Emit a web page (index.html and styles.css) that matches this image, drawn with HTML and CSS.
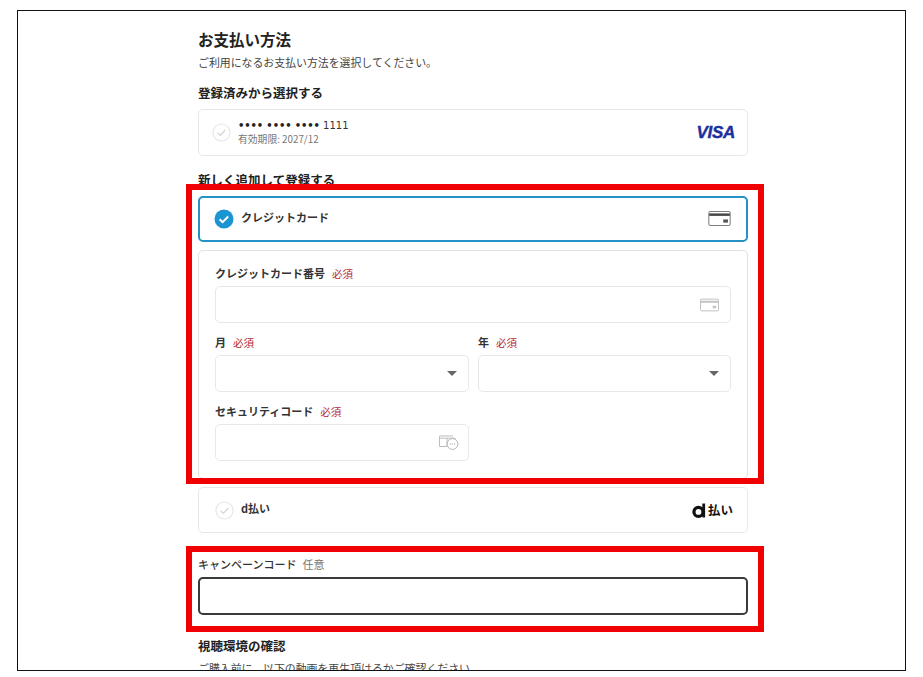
FILE: index.html
```html
<!DOCTYPE html>
<html lang="ja">
<head>
<meta charset="utf-8">
<title>お支払い方法</title>
<link rel="stylesheet" href="styles.css">
</head>
<body>
<div class="frame">
  <main class="content">
    <h1 class="title">お支払い方法</h1>
    <p class="lead">ご利用になるお支払い方法を選択してください。</p>

    <h2 class="section first">登録済みから選択する</h2>
    <div class="option saved">
      <svg class="check" viewBox="0 0 20 20"><circle cx="10" cy="10" r="9" fill="#fff" stroke="#e6e6e6" stroke-width="1.2"/><path d="M6 10.3l2.8 2.7L14 7.400" fill="none" stroke="#d4d4d4" stroke-width="1.3"/></svg>
      <div class="card-text">
        <div class="card-number"><span class="dots">••••</span> <span class="dots">••••</span> <span class="dots">••••</span> 1111</div>
        <div class="card-expiry">有効期限: 2027/12</div>
      </div>
      <span class="visa">VISA</span>
    </div>

    <h2 class="section second">新しく追加して登録する</h2>
    <div class="option selected">
      <svg class="check" viewBox="0 0 20 20"><circle cx="10" cy="10" r="9.500" fill="#1b95d2"/><path d="M5.600 10.200l3 2.900 5.600-5.600" fill="none" stroke="#fff" stroke-width="2"/></svg>
      <span class="option-name">クレジットカード</span>
      <svg class="card-icon" viewBox="0 0 24 16"><rect x=".6" y=".6" width="22.800" height="14.800" rx="1.600" fill="#fff" stroke="#7d7d7d" stroke-width="1.100"/><rect x="1" y="2.600" width="22" height="2.600" fill="#444"/><rect x="16" y="9" width="5" height="3.400" fill="#555"/></svg>
    </div>

    <div class="panel">
      <div class="field wide">
        <label class="label">クレジットカード番号<span class="req">必須</span></label>
        <div class="input">
          <svg class="card-icon small" viewBox="0 0 24 16"><rect x=".6" y=".6" width="22.800" height="14.800" rx="1.400" fill="#fff" stroke="#b8b8b8" stroke-width="1.100"/><rect x="1" y="2.600" width="22" height="2.600" fill="#c4c4c4"/><rect x="16" y="9" width="4.500" height="3.200" fill="#c4c4c4"/></svg>
        </div>
      </div>
      <div class="field">
        <label class="label">月<span class="req">必須</span></label>
        <div class="input"><span class="caret"></span></div>
      </div>
      <div class="field">
        <label class="label">年<span class="req">必須</span></label>
        <div class="input"><span class="caret"></span></div>
      </div>
      <div class="field">
        <label class="label">セキュリティコード<span class="req">必須</span></label>
        <div class="input">
          <svg class="cvc-icon" viewBox="0 0 21 15"><path d="M15 1H1.500v10.500H9" fill="none" stroke="#bdbdbd" stroke-width="1"/><path d="M1.500 3.200H17V5M9 3.200v8" fill="none" stroke="#bdbdbd" stroke-width="1"/><circle cx="14.500" cy="9" r="5.400" fill="#fff" stroke="#b5b5b5" stroke-width="1"/><path d="M11.800 9h1.200M13.900 9h1.200M16 9h1.200" stroke="#a5a5a5" stroke-width="1.100"/></svg>
        </div>
      </div>
    </div>

    <div class="option dpay">
      <svg class="check" viewBox="0 0 20 20"><circle cx="10" cy="10" r="9" fill="#fff" stroke="#e6e6e6" stroke-width="1.2"/><path d="M6 10.300l2.800 2.700L14 7.400" fill="none" stroke="#d4d4d4" stroke-width="1.300"/></svg>
      <span class="option-name">d払い</span>
      <span class="dpay-logo">
        <svg class="dpay-d" viewBox="0 0 13 14"><circle cx="6" cy="8.300" r="4.200" fill="none" stroke="#111" stroke-width="3"/><path d="M10.900 .5v13" stroke="#111" stroke-width="2.600"/></svg>
        <span class="dpay-text">払い</span>
      </span>
    </div>

    <label class="label campaign">キャンペーンコード<span class="opt">任意</span></label>
    <div class="campaign-input"></div>

    <h2 class="section third">視聴環境の確認</h2>
    <p class="lead tail">ご購入前に、以下の動画を再生頂けるかご確認ください。</p>
  </main>
</div>
<div class="mark mark-card"></div>
<div class="mark mark-campaign"></div>
</body>
</html>
```
FILE: styles.css
```css
* { box-sizing: border-box; }
html, body { margin: 0; padding: 0; background: #fff; }
body {
  position: relative;
  height: 677px;
  overflow: hidden;
  padding: 10px 0 0 17px;
  font-family: "Noto Sans CJK JP", "Noto Sans", sans-serif;
  color: #222;
}
.frame {
  width: 889px;
  height: 661px;
  border: 1px solid #111;
  overflow: hidden;
  background: #fff;
}
.content {
  width: 550px;
  margin-left: 180px;
  padding-top: 18px;
}
.title {
  margin: 0;
  font-size: 15.5px;
  line-height: 20px;
  font-weight: 700;
}
.lead {
  margin: 5px 0 0;
  font-size: 10.9px;
  line-height: 16px;
  color: #444;
}
.section {
  margin: 0;
  font-size: 12.5px;
  line-height: 18px;
  font-weight: 700;
}
.section.first { margin-top: 14px; }
.section.second { margin-top: 15px; }
.section.third { margin-top: 22px; }
.option {
  display: flex;
  align-items: center;
  background: #fff;
  border: 1px solid #e8e8e8;
  border-radius: 5px;
}
.saved { margin-top: 7px; height: 47px; padding: 0 12px 0 13px; }
.selected {
  margin-top: 7px;
  height: 46px;
  padding: 0 14px 0 14px;
  border: 2px solid #2591c4;
}
.dpay { margin-top: 8px; height: 46px; padding: 0 14px 0 16px; }
.check { width: 19px; height: 19px; flex: none; }
.selected .check { width: 20px; height: 20px; }
.card-text { margin-left: 7px; flex: 1; }
.card-number {
  font-family: "DejaVu Sans", sans-serif;
  font-size: 10px;
  line-height: 14px;
  color: #333;
}
.dots { font-weight: 700; letter-spacing: -.1px; color: #222; }
.card-expiry {
  font-size: 9.800px;
  line-height: 13px;
  color: #777;
}
.visa {
  font-family: "Liberation Sans", sans-serif;
  font-size: 17px;
  font-weight: 700;
  font-style: italic;
  letter-spacing: -.3px;
  color: #1b2f9e;
  -webkit-text-stroke: .4px #1b2f9e;
}
.option-name {
  flex: 1;
  margin: -4px 0 0 7px;
  font-size: 11px;
  font-weight: 700;
  line-height: 16px;
  color: #333;
}
.selected .option-name { margin-top: -5px; }
.card-icon { width: 23px; height: 15px; flex: none; margin-top: -1px; margin-right: 1px; }
.panel {
  margin-top: 8px;
  height: 229px;
  padding: 15px 16px 0;
  border: 1px solid #e2e2e4;
  border-radius: 5px;
  display: grid;
  grid-template-columns: 254px 253px;
  grid-auto-rows: 57px;
  column-gap: 9px;
  row-gap: 12px;
}
.field.wide { grid-column: 1 / -1; }
.field { display: flex; flex-direction: column; gap: 4px; }
.label {
  display: block;
  height: 16px;
  font-size: 11px;
  line-height: 15px;
  font-weight: 700;
  color: #333;
}
.req {
  margin-left: 7px;
  font-size: 10.500px;
  line-height: 1;
  font-weight: 400;
  color: #b52a32;
}
.opt {
  margin-left: 6px;
  font-size: 11px;
  line-height: 1;
  font-weight: 400;
  color: #777;
}
.input {
  height: 37px;
  border: 1px solid #e8e8e8;
  border-radius: 5px;
  display: flex;
  align-items: center;
  justify-content: flex-end;
  padding-right: 11px;
}
.card-icon.small { width: 19px; height: 14px; margin: 0; }
.cvc-icon { width: 21px; height: 15px; margin-right: -2px; }
.caret {
  width: 0;
  height: 0;
  border-left: 5px solid transparent;
  border-right: 5px solid transparent;
  border-top: 5px solid #666;
}
.dpay-logo { display: flex; align-items: center; gap: 2px; }
.dpay-d { width: 14px; height: 15px; }
.dpay-text { font-size: 12.500px; line-height: 16px; font-weight: 700; color: #111; }
.campaign { margin-top: 24px; font-weight: 500; color: #333; }
.campaign-input {
  margin-top: 4px;
  height: 38px;
  border: 2px solid #3a3a3a;
  border-radius: 5px;
}
.tail { color: #444; }
.mark {
  position: absolute;
  left: 186px;
  width: 578px;
  border: 6px solid #f00000;
  pointer-events: none;
}
.mark-card { top: 184px; height: 300px; }
.mark-campaign { top: 546px; height: 86px; }
```
